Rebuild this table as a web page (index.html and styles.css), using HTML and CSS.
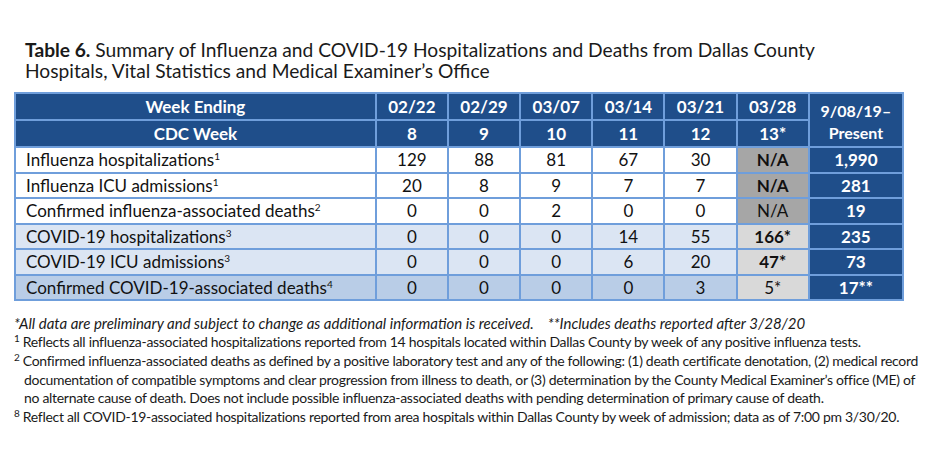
FILE: index.html
```html
<!DOCTYPE html>
<html>
<head>
<meta charset="utf-8">
<link rel="stylesheet" href="styles.css">
</head>
<body>
<div class="page">
  <h1 class="title"><b>Table 6.</b> Summary of Influenza and COVID-19 Hospitalizations and Deaths from Dallas County<br>Hospitals, Vital Statistics and Medical Examiner’s Office</h1>
  <table class="data">
    <colgroup>
      <col class="c-label"><col class="c-wk"><col class="c-wk"><col class="c-wk"><col class="c-wk"><col class="c-wk"><col class="c-wk"><col class="c-tot">
    </colgroup>
    <thead>
      <tr class="h1">
        <th>Week Ending</th><th>02/22</th><th>02/29</th><th>03/07</th><th>03/14</th><th>03/21</th><th>03/28</th><th rowspan="2" class="tot-h">9/08/19–<br>Present</th>
      </tr>
      <tr class="h2">
        <th>CDC Week</th><th>8</th><th>9</th><th>10</th><th>11</th><th>12</th><th>13*</th>
      </tr>
    </thead>
    <tbody>
      <tr class="white">
        <td class="lbl">Influenza hospitalizations<sup>1</sup></td><td>129</td><td>88</td><td>81</td><td>67</td><td>30</td><td class="na b">N/A</td><td class="tot">1,990</td>
      </tr>
      <tr class="white">
        <td class="lbl">Influenza ICU admissions<sup>1</sup></td><td>20</td><td>8</td><td>9</td><td>7</td><td>7</td><td class="na b">N/A</td><td class="tot">281</td>
      </tr>
      <tr class="white">
        <td class="lbl">Confirmed influenza-associated deaths<sup>2</sup></td><td>0</td><td>0</td><td>2</td><td>0</td><td>0</td><td class="na">N/A</td><td class="tot">19</td>
      </tr>
      <tr class="blue">
        <td class="lbl">COVID-19 hospitalizations<sup>3</sup></td><td>0</td><td>0</td><td>0</td><td>14</td><td>55</td><td class="lg b">166*</td><td class="tot">235</td>
      </tr>
      <tr class="blue">
        <td class="lbl">COVID-19 ICU admissions<sup>3</sup></td><td>0</td><td>0</td><td>0</td><td>6</td><td>20</td><td class="lg b">47*</td><td class="tot">73</td>
      </tr>
      <tr class="blue2">
        <td class="lbl">Confirmed COVID-19-associated deaths<sup>4</sup></td><td>0</td><td>0</td><td>0</td><td>0</td><td>3</td><td class="lg">5*</td><td class="tot">17**</td>
      </tr>
    </tbody>
  </table>
  <div class="notes">
    <p class="it">*All data are preliminary and subject to change as additional information is received.&nbsp;&nbsp;&nbsp; **Includes deaths reported after 3/28/20</p>
    <p><sup>1</sup> Reflects all influenza-associated hospitalizations reported from 14 hospitals located within Dallas County by week of any positive influenza tests.</p>
    <p class="hang"><sup>2</sup> Confirmed influenza-associated deaths as defined by a positive laboratory test and any of the following: (1) death certificate denotation, (2) medical record documentation of compatible symptoms and clear progression from illness to death, or (3) determination by the County Medical Examiner’s office (ME) of no alternate cause of death. Does not include possible influenza-associated deaths with pending determination of primary cause of death.</p>
    <p><sup>8</sup> Reflect all COVID-19-associated hospitalizations reported from area hospitals within Dallas County by week of admission; data as of 7:00 pm 3/30/20.</p>
  </div>
</div>
</body>
</html>
```
FILE: styles.css
```css
html, body {
  margin: 0;
  padding: 0;
  background: #ffffff;
}
body {
  font-family: "Lato", "Open Sans", sans-serif;
  color: #1a1a1a;
}
.page {
  width: 932px;
  height: 470px;
  padding: 39px 0 0 0;
  box-sizing: border-box;
}
.title {
  margin: 0 0 0 25px;
  font-size: 19.2px;
  font-weight: 400;
  line-height: 21px;
  color: #1a1a1a;
}
.title b {
  font-weight: 700;
}
.data {
  margin: 11px 0 0 14px;
  border-collapse: collapse;
  table-layout: fixed;
  width: 890px;
  border: 2px solid #5b8fd3;
  font-size: 17px;
}
.c-label { width: 360px; }
.c-wk { width: 72px; }
.c-tot { width: 94px; }
.data th, .data td {
  border: 2px solid #6f9edb;
  text-align: center;
  padding: 0;
  white-space: nowrap;
}
.data th {
  background: #1f4e8a;
  color: #ffffff;
  font-weight: 700;
  height: 25px;
  line-height: 25px;
}
.data th.tot-h {
  line-height: 22px;
  font-size: 16px;
  padding-top: 3px;
}
.data td {
  height: 23.5px;
  line-height: 23.5px;
  color: #111;
}
.data td.lbl {
  text-align: left;
  padding-left: 10px;
}
.data sup {
  font-size: 10px;
  line-height: 0;
  vertical-align: 6px;
}
tr.white td { background: #ffffff; }
tr.blue td { background: #dbe5f3; }
tr.blue2 td { background: #b9cde7; }
.data td.na { background: #a6a6a6; }
.data td.lg { background: #d9d9d9; }
.data td.b { font-weight: 700; }
.data td.tot {
  background: #1f4e8a;
  color: #ffffff;
  font-weight: 700;
}
.notes {
  margin: 13px 0 0 14px;
  width: 912px;
  font-size: 14px;
  letter-spacing: -0.3px;
  line-height: 18.2px;
  color: #1a1a1a;
}
.notes p {
  margin: 0 0 1px 0;
}
.notes .it {
  font-style: italic;
  font-size: 15px;
  letter-spacing: 0;
}
.notes sup {
  font-size: 10px;
  line-height: 0;
  vertical-align: 5px;
}
.notes .hang {
  padding-left: 10px;
  text-indent: -10px;
}
```
